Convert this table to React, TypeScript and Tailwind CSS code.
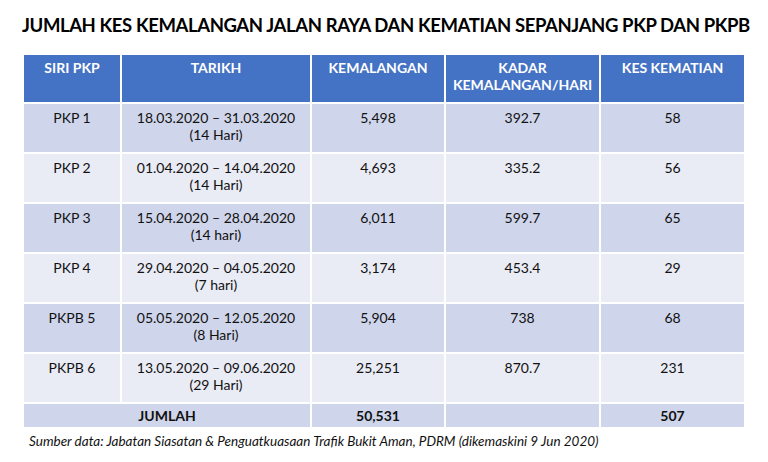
import React from "react";

const rows = [
  { siri: "PKP 1", d: "18.03.2020 – 31.03.2020", h: "(14 Hari)", k: "5,498", r: "392.7", m: "58" },
  { siri: "PKP 2", d: "01.04.2020 – 14.04.2020", h: "(14 Hari)", k: "4,693", r: "335.2", m: "56" },
  { siri: "PKP 3", d: "15.04.2020 – 28.04.2020", h: "(14 hari)", k: "6,011", r: "599.7", m: "65" },
  { siri: "PKP 4", d: "29.04.2020 – 04.05.2020", h: "(7 hari)", k: "3,174", r: "453.4", m: "29" },
  { siri: "PKPB 5", d: "05.05.2020 – 12.05.2020", h: "(8 Hari)", k: "5,904", r: "738", m: "68" },
  { siri: "PKPB 6", d: "13.05.2020 – 09.06.2020", h: "(29 Hari)", k: "25,251", r: "870.7", m: "231" },
];

export default function App() {
  return (
    <div className="w-[768px] h-[462px] bg-white overflow-hidden text-[#111]" style={{ fontFamily: "Lato, 'Open Sans', sans-serif" }}>
      <div className="pt-[13px] pl-[22px] h-[55px]">
        <h1 className="text-[18.5px] font-bold tracking-[-0.4px] text-black leading-[24px] whitespace-nowrap">
          JUMLAH KES KEMALANGAN JALAN RAYA DAN KEMATIAN SEPANJANG PKP DAN PKPB
        </h1>
      </div>
      <div className="ml-[24px] w-[720px] grid grid-cols-[96px_188px_132px_153px_143px] gap-[2px] text-[14px] leading-[17px] text-center">
        {["SIRI PKP", "TARIKH", "KEMALANGAN"].map((t) => (
          <div key={t} className="bg-[#4472c4] text-white font-bold h-[47px] pt-[4px]">{t}</div>
        ))}
        <div className="bg-[#4472c4] text-white font-bold h-[47px] pt-[4px]">KADAR<br />KEMALANGAN/HARI</div>
        <div className="bg-[#4472c4] text-white font-bold h-[47px] pt-[4px]">KES KEMATIAN</div>
        {rows.map((row, i) => {
          const bg = i % 2 === 0 ? "bg-[#cfd5ea]" : "bg-[#e9ebf5]";
          return (
            <React.Fragment key={row.siri}>
              <div className={`${bg} h-[48px] pt-[5px]`}>{row.siri}</div>
              <div className={`${bg} h-[48px] pt-[5px]`}>{row.d}<br />{row.h}</div>
              <div className={`${bg} h-[48px] pt-[5px]`}>{row.k}</div>
              <div className={`${bg} h-[48px] pt-[5px]`}>{row.r}</div>
              <div className={`${bg} h-[48px] pt-[5px]`}>{row.m}</div>
            </React.Fragment>
          );
        })}
        <div className="col-span-2 bg-[#cfd5ea] h-[23px] pt-[3px] font-bold">JUMLAH</div>
        <div className="bg-[#cfd5ea] h-[23px] pt-[3px] font-bold">50,531</div>
        <div className="bg-[#cfd5ea] h-[23px]"></div>
        <div className="bg-[#cfd5ea] h-[23px] pt-[3px] font-bold">507</div>
      </div>
      <div className="pl-[29px] pt-[6px] text-[13.5px] italic leading-[16px] text-[#111] whitespace-nowrap">
        Sumber data: Jabatan Siasatan &amp; Penguatkuasaan Trafik Bukit Aman, PDRM (dikemaskini 9 Jun 2020)
      </div>
    </div>
  );
}
